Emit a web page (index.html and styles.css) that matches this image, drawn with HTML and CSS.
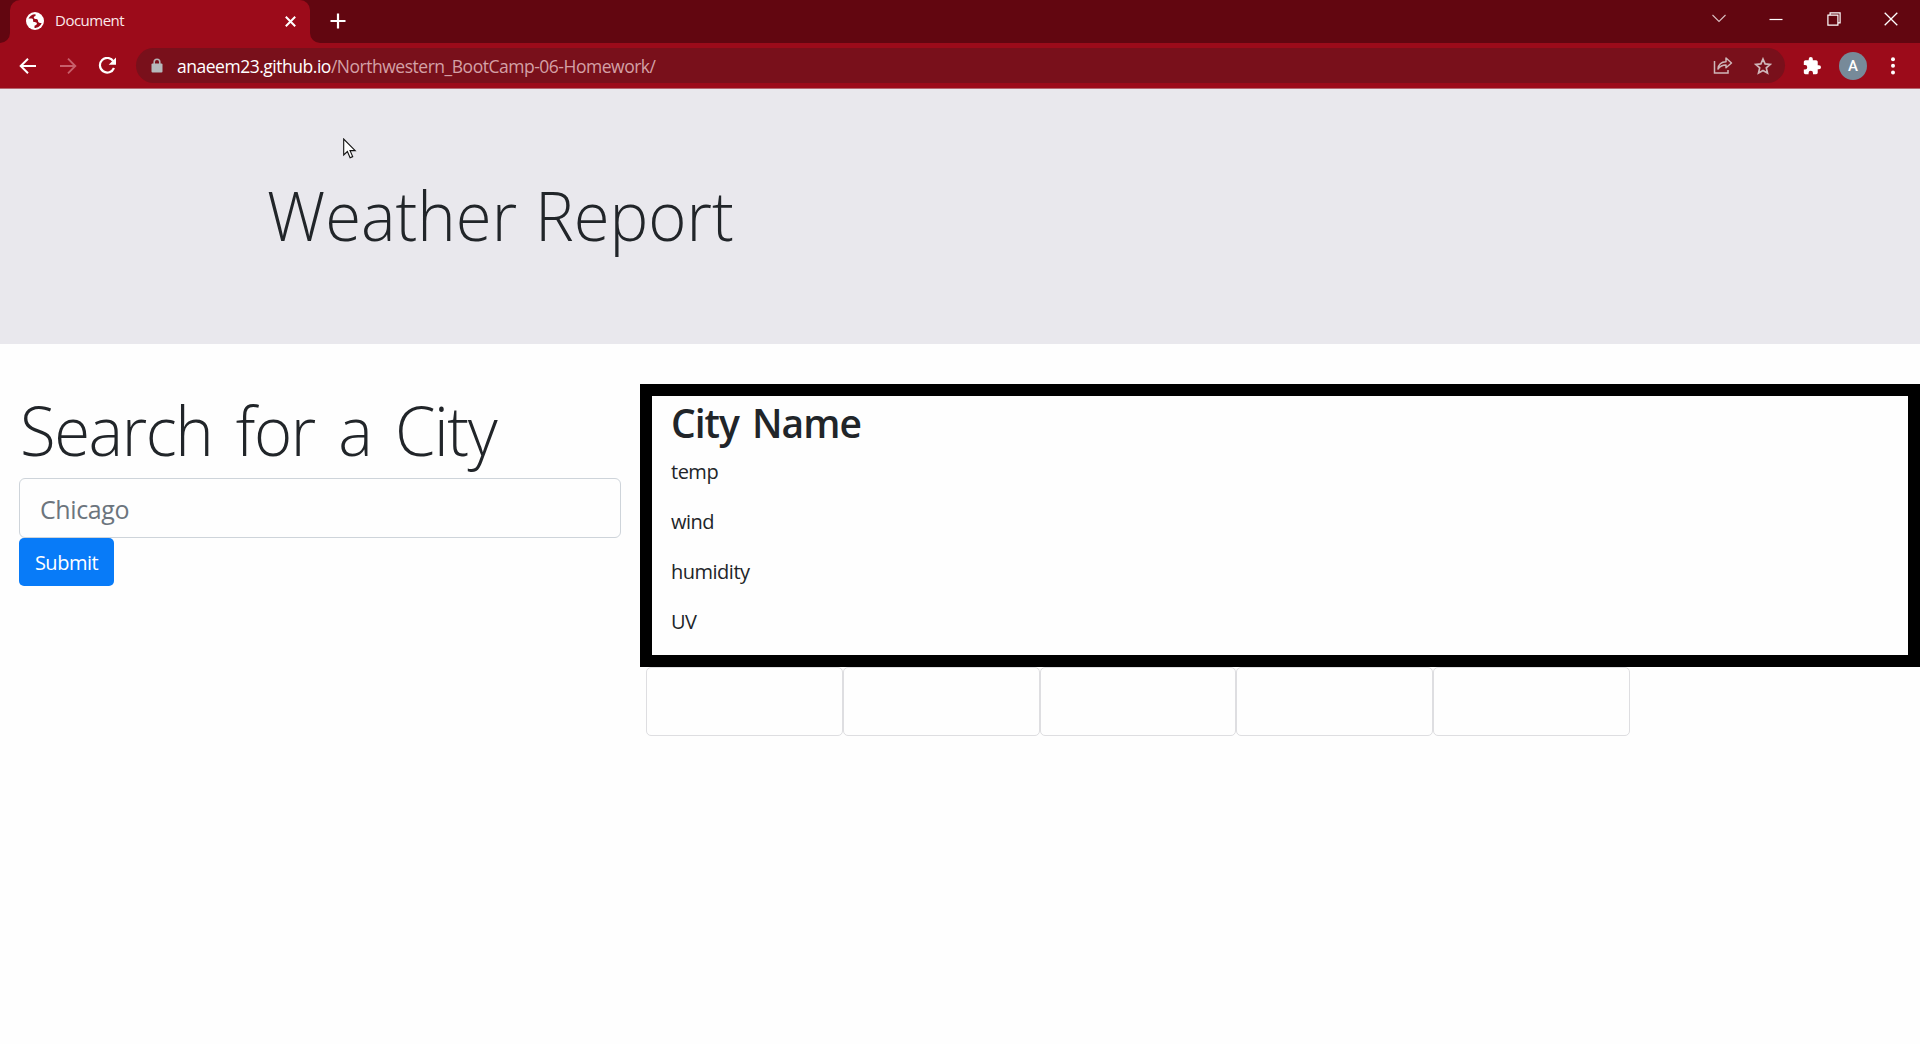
FILE: index.html
```html
<!DOCTYPE html>
<html lang="en">
<head>
<meta charset="UTF-8">
<title>Document</title>
<link rel="stylesheet" href="styles.css">
</head>
<body>
<header class="browser">
  <div class="tab-strip">
    <div class="tab-edge"></div>
    <div class="tab">
      <svg class="globe" width="18" height="18" viewBox="0 0 18 18"><circle cx="9" cy="9" r="9" fill="#fff"/><path d="M9.500 2.200C6.500 2 3.600 4 2.500 6.500c1.700.2 3.300-.6 4.200.4.900 1-.2 2.400 1 3 1.200.5 2.500 0 3.100 1.200.5 1.200-.8 2.300-2.300 2.600v2.200c3.500 0 6.300-2.300 7.100-5-1.500.4-2.700.2-3.300-.9-.6-1.100.1-1.900-.9-2.600-1-.6-2.800.1-3.400-1.100C7.400 5 8.200 4.200 9.500 3.900z" fill="#9c0b1a"/></svg>
      <span class="tab-title">Document</span>
      <svg class="tab-close" width="11" height="11" viewBox="0 0 11 11" stroke="#fff" stroke-width="2"><path d="M.8.8l9.400 9.400M10.200.8L.8 10.200"/></svg>
    </div>
    <div class="tab-rest">
      <svg width="16" height="16" viewBox="0 0 16 16" stroke="#fff" stroke-width="2.200"><path d="M8 .5v15M.5 8h15"/></svg>
      <div class="window-controls">
        <svg width="14" height="9" viewBox="0 0 14 9" fill="none" stroke="#d9bfc2" stroke-width="1.100"><path d="M.5 1L7 7.500 13.500 1"/></svg>
        <svg width="14" height="14" viewBox="0 0 14 14" stroke="#fff" stroke-width="1.200"><path d="M.5 7.500h13"/></svg>
        <svg width="14" height="14" viewBox="0 0 14 14" fill="none" stroke="#fff" stroke-width="1.200"><path d="M.9 3.100h10v10h-10zM3.100 3V.9h10v10H11"/></svg>
        <svg width="14" height="14" viewBox="0 0 14 14" stroke="#fff" stroke-width="1.300"><path d="M.7.7l12.600 12.600M13.300.7L.7 13.300"/></svg>
      </div>
    </div>
  </div>
  <div class="toolbar">
    <div class="nav-icons">
      <svg width="18" height="18" viewBox="0 0 18 18" fill="none" stroke="#fff" stroke-width="2"><path d="M17 9H2.500M9 1.700L1.700 9 9 16.300"/></svg>
      <svg width="18" height="18" viewBox="0 0 18 18" fill="none" stroke="#c85f6b" stroke-width="1.900"><path d="M1 9h14.500M9 1.700L16.300 9 9 16.300"/></svg>
      <svg width="19" height="18" viewBox="0 0 19 18" fill="none" stroke="#fff" stroke-width="2.200"><path d="M15.400 4.300A7.300 7.300 0 1 0 16 11"/><path d="M18 .5v7.300h-7.300z" fill="#fff" stroke="none"/></svg>
    </div>
    <div class="omnibox">
      <svg width="12" height="15" viewBox="0 0 12 15"><path d="M3.200 6V4a2.800 2.800 0 0 1 5.600 0v2" fill="none" stroke="#b6b0b3" stroke-width="1.600"/><rect x=".5" y="5.500" width="11" height="9" rx="1" fill="#b6b9bc"/></svg>
      <span class="url"><span class="host">anaeem23.github.io</span><span class="path">/Northwestern_BootCamp-06-Homework/</span></span>
      <svg class="share" width="20" height="19" viewBox="0 0 20 19" fill="none" stroke="#cfb6b9" stroke-width="1.500"><path d="M1.500 5v12h13.500v-3"/><path d="M5 13c.4-4.500 3-7 8-7.200V2l5.500 5-5.500 4.800V9C9.500 9 7 10.200 5 13z" stroke-linejoin="round"/></svg>
      <svg width="18" height="18" viewBox="0 0 18 18" fill="none" stroke="#cfb6b9" stroke-width="1.700"><path d="M9 2l2.100 4.900 5.200.5-4 3.500 1.200 5.200L9 13.400l-4.500 2.700 1.200-5.200-4-3.500 5.200-.5z"/></svg>
    </div>
    <svg class="puzzle" width="18" height="18" viewBox="1 1 22 22" fill="#fff"><path d="M20.500 11H19V7c0-1.100-.9-2-2-2h-4V3.500a2.500 2.500 0 0 0-5 0V5H4c-1.100 0-2 .9-2 2v3.800h1.500a2.700 2.700 0 0 1 0 5.400H2V20c0 1.100.9 2 2 2h3.800v-1.500a2.700 2.700 0 0 1 5.400 0V22H17c1.100 0 2-.9 2-2v-4h1.500a2.500 2.500 0 0 0 0-5z"/></svg>
    <div class="avatar">A</div>
    <svg class="menu" width="4" height="18" viewBox="0 0 4 18" fill="#fff"><circle cx="2" cy="2.300" r="2"/><circle cx="2" cy="8.800" r="2"/><circle cx="2" cy="15.400" r="2"/></svg>
  </div>
</header>
<main>
  <section class="jumbotron"><h1 class="display hero-title">Weather Report</h1></section>
  <div class="columns">
    <section class="search">
      <h1 class="display search-title">Search for a City</h1>
      <input class="city-input" type="text" placeholder="Chicago">
      <button class="submit">Submit</button>
    </section>
    <section class="results">
      <div class="current">
        <h2>City Name</h2>
        <p>temp</p>
        <p>wind</p>
        <p>humidity</p>
        <p>UV</p>
      </div>
      <div class="forecast">
        <div class="card"></div><div class="card"></div><div class="card"></div><div class="card"></div><div class="card"></div>
      </div>
    </section>
  </div>
</main>
<svg class="cursor" width="14" height="21" viewBox="0 0 14 21"><path d="M.7 1v16l3.700-3.500 2.700 6.200 2.600-1.100L7 12.600h5.200z" fill="#fff" stroke="#111" stroke-width="1.100"/></svg>
</body>
</html>
```
FILE: styles.css
```css
* { box-sizing: border-box; }
body {
  margin: 0;
  height: 1044px;
  overflow: hidden;
  background: #fefefe;
  color: #212529;
  font: 400 20px/30px "Open Sans", "Noto Sans", sans-serif;
}
svg { display: block; flex: none; }
h1, h2, p { margin: 0; }

.browser { background: #9c0b1a; height: 89px; border-bottom: 1px solid #b56770; }
.tab-strip { display: flex; height: 43px; background: linear-gradient(#620610 0 20px, #9c0b1a 20px); }
.tab-edge { width: 10px; background: #620610; border-bottom-right-radius: 10px; }
.tab {
  width: 300px;
  display: flex;
  align-items: center;
  padding: 0 14px 1px 16px;
  background: #9c0b1a;
  border-radius: 10px 10px 0 0;
}
.tab-title { flex: 1; margin-left: 11px; padding-bottom: 2px; color: #fbe9ea; font-size: 15px; letter-spacing: -0.5px; }
.tab-rest {
  flex: 1;
  display: flex;
  align-items: center;
  justify-content: space-between;
  padding: 0 22px 1px 20px;
  background: #620610;
  border-bottom-left-radius: 10px;
}
.window-controls { display: flex; align-items: center; gap: 43.500px; padding-bottom: 5px; }
.toolbar { display: flex; align-items: center; height: 45px; padding: 0 25px 0 19px; }
.nav-icons { display: flex; gap: 21.500px; width: 117px; }
.omnibox {
  display: flex;
  align-items: center;
  width: 1649px;
  height: 35px;
  padding: 0 13px 0 15px;
  border-radius: 18px;
  background: #79101b;
}
.url { flex: 1; margin-left: 14px; font-size: 17.500px; white-space: nowrap; letter-spacing: -0.480px; }
.host { color: #fff; }
.path { color: #d4a0a6; }
.share { margin-right: 21px; }
.puzzle { margin-left: 18px; }
.avatar {
  width: 28px;
  height: 28px;
  margin: 0 24px 0 18px;
  border-radius: 50%;
  background: #778a99;
  color: #fff;
  font: 500 15px/28px Roboto, sans-serif;
  text-align: center;
}

.jumbotron { height: 255px; padding: 83px 267px; background: #e9e8ed; }
.display { font-size: 69px; line-height: 84px; font-weight: 300; white-space: nowrap; transform: scaleX(0.945); transform-origin: left; }
.hero-title { word-spacing: 1px; }
.columns { display: flex; margin-top: 40px; }
.search { width: 640px; padding: 3px 19px; display: flex; flex-direction: column; align-items: flex-start; }
.search-title { margin-left: 1px; letter-spacing: -1.500px; word-spacing: 8.500px; }
.city-input {
  width: 602px;
  height: 60px;
  margin-top: 7px;
  padding: 2px 20px 0;
  border: 1px solid #ced4da;
  border-radius: 6px;
  background: #fefefe;
  font: 400 25px "Open Sans", sans-serif;
}
.city-input::placeholder { color: #6c757d; letter-spacing: -0.4px; }
.submit {
  width: 95px;
  height: 48px;
  padding: 0;
  border: 0;
  border-radius: 5px;
  background: #087bf8;
  color: #fff;
  font: 400 20px "Open Sans", sans-serif;
  letter-spacing: -0.5px;
}
.results { width: 1280px; }
.current { height: 283px; padding: 3px 19px; border: 12px solid #000; background: #fefefe; letter-spacing: -0.5px; }
.current h2 { height: 58px; font-size: 39px; line-height: 48px; font-weight: 600; letter-spacing: -1px; word-spacing: 4px; }
.current p { height: 50px; }
.forecast { display: flex; padding-left: 6px; }
.card { width: 196.800px; height: 69px; border: 1px solid #dedee1; border-radius: 5px; }
.cursor { position: absolute; left: 343px; top: 138px; }
```
